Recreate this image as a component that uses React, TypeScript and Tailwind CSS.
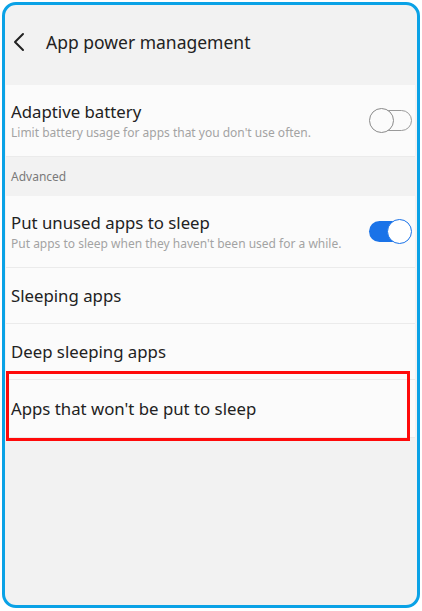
import React from "react";

function SwitchOff() {
  return (
    <div className="relative w-[43px] h-[25px] shrink-0">
      <div className="absolute left-[8px] right-0 top-[2px] bottom-[2px] rounded-full border-[1.5px] border-[#9a9a9a]" />
      <div className="absolute left-0 top-0 w-[25px] h-[25px] rounded-full border-[1.5px] border-[#8a8a8a] bg-[#fbfbfb]" />
    </div>
  );
}

function SwitchOn() {
  return (
    <div className="relative w-[43px] h-[25px] shrink-0">
      <div className="absolute left-0 right-[6px] top-[2px] bottom-[2px] rounded-full bg-[#1a73e8]" />
      <div className="absolute right-0 top-0 w-[25px] h-[25px] rounded-full border-[1.5px] border-[#1a73e8] bg-white" />
    </div>
  );
}

function Row({ title, sub, right, h }: { title: string; sub?: string; right?: React.ReactNode; h: string }) {
  return (
    <div className={`flex items-center ml-px mr-[2px] bg-[#fbfbfb] border-b border-[#ebebeb] pl-[5px] pr-[3px] ${h}`}>
      <div className="flex-1 min-w-0">
        <div className="text-[16.8px] leading-[22px] text-[#222]">{title}</div>
        {sub && <div className="text-[12px] leading-[14px] text-[#a3a3a3] mt-[3px] whitespace-nowrap">{sub}</div>}
      </div>
      {right}
    </div>
  );
}

export default function App() {
  return (
    <div className="w-[422px] h-[611px] bg-white pt-[2px] pl-[2px]" style={{ fontFamily: "'Noto Sans', Roboto, sans-serif" }}>
      <div className="relative w-[418px] h-[606px] border-[3.5px] border-[#0aa2e6] rounded-[14px] bg-[#f2f2f2] overflow-hidden">
        <div className="h-[80px] flex items-center pb-[6px]">
          <svg width="12" height="20" viewBox="0 0 12 20" className="ml-[8px]">
            <path d="M10 2 L2 10 L10 18" fill="none" stroke="#222" strokeWidth="2" strokeLinecap="round" strokeLinejoin="round" />
          </svg>
          <div className="ml-[21px] text-[17.5px] text-[#222]">App power management</div>
        </div>
        <Row h="h-[72px]" title="Adaptive battery" sub="Limit battery usage for apps that you don't use often." right={<SwitchOff />} />
        <div className="h-[39px] flex items-center pl-[6px] text-[12px] text-[#7a7a7a]">Advanced</div>
        <Row h="h-[72px]" title="Put unused apps to sleep" sub="Put apps to sleep when they haven't been used for a while." right={<SwitchOn />} />
        <Row h="h-[56px]" title="Sleeping apps" />
        <Row h="h-[56px]" title="Deep sleeping apps" />
        <Row h="h-[58px]" title="Apps that won't be put to sleep" />
        <div className="absolute left-[1px] top-[366px] w-[404px] h-[70px] border-[3px] border-[#ff0a0a]" />
      </div>
    </div>
  );
}
